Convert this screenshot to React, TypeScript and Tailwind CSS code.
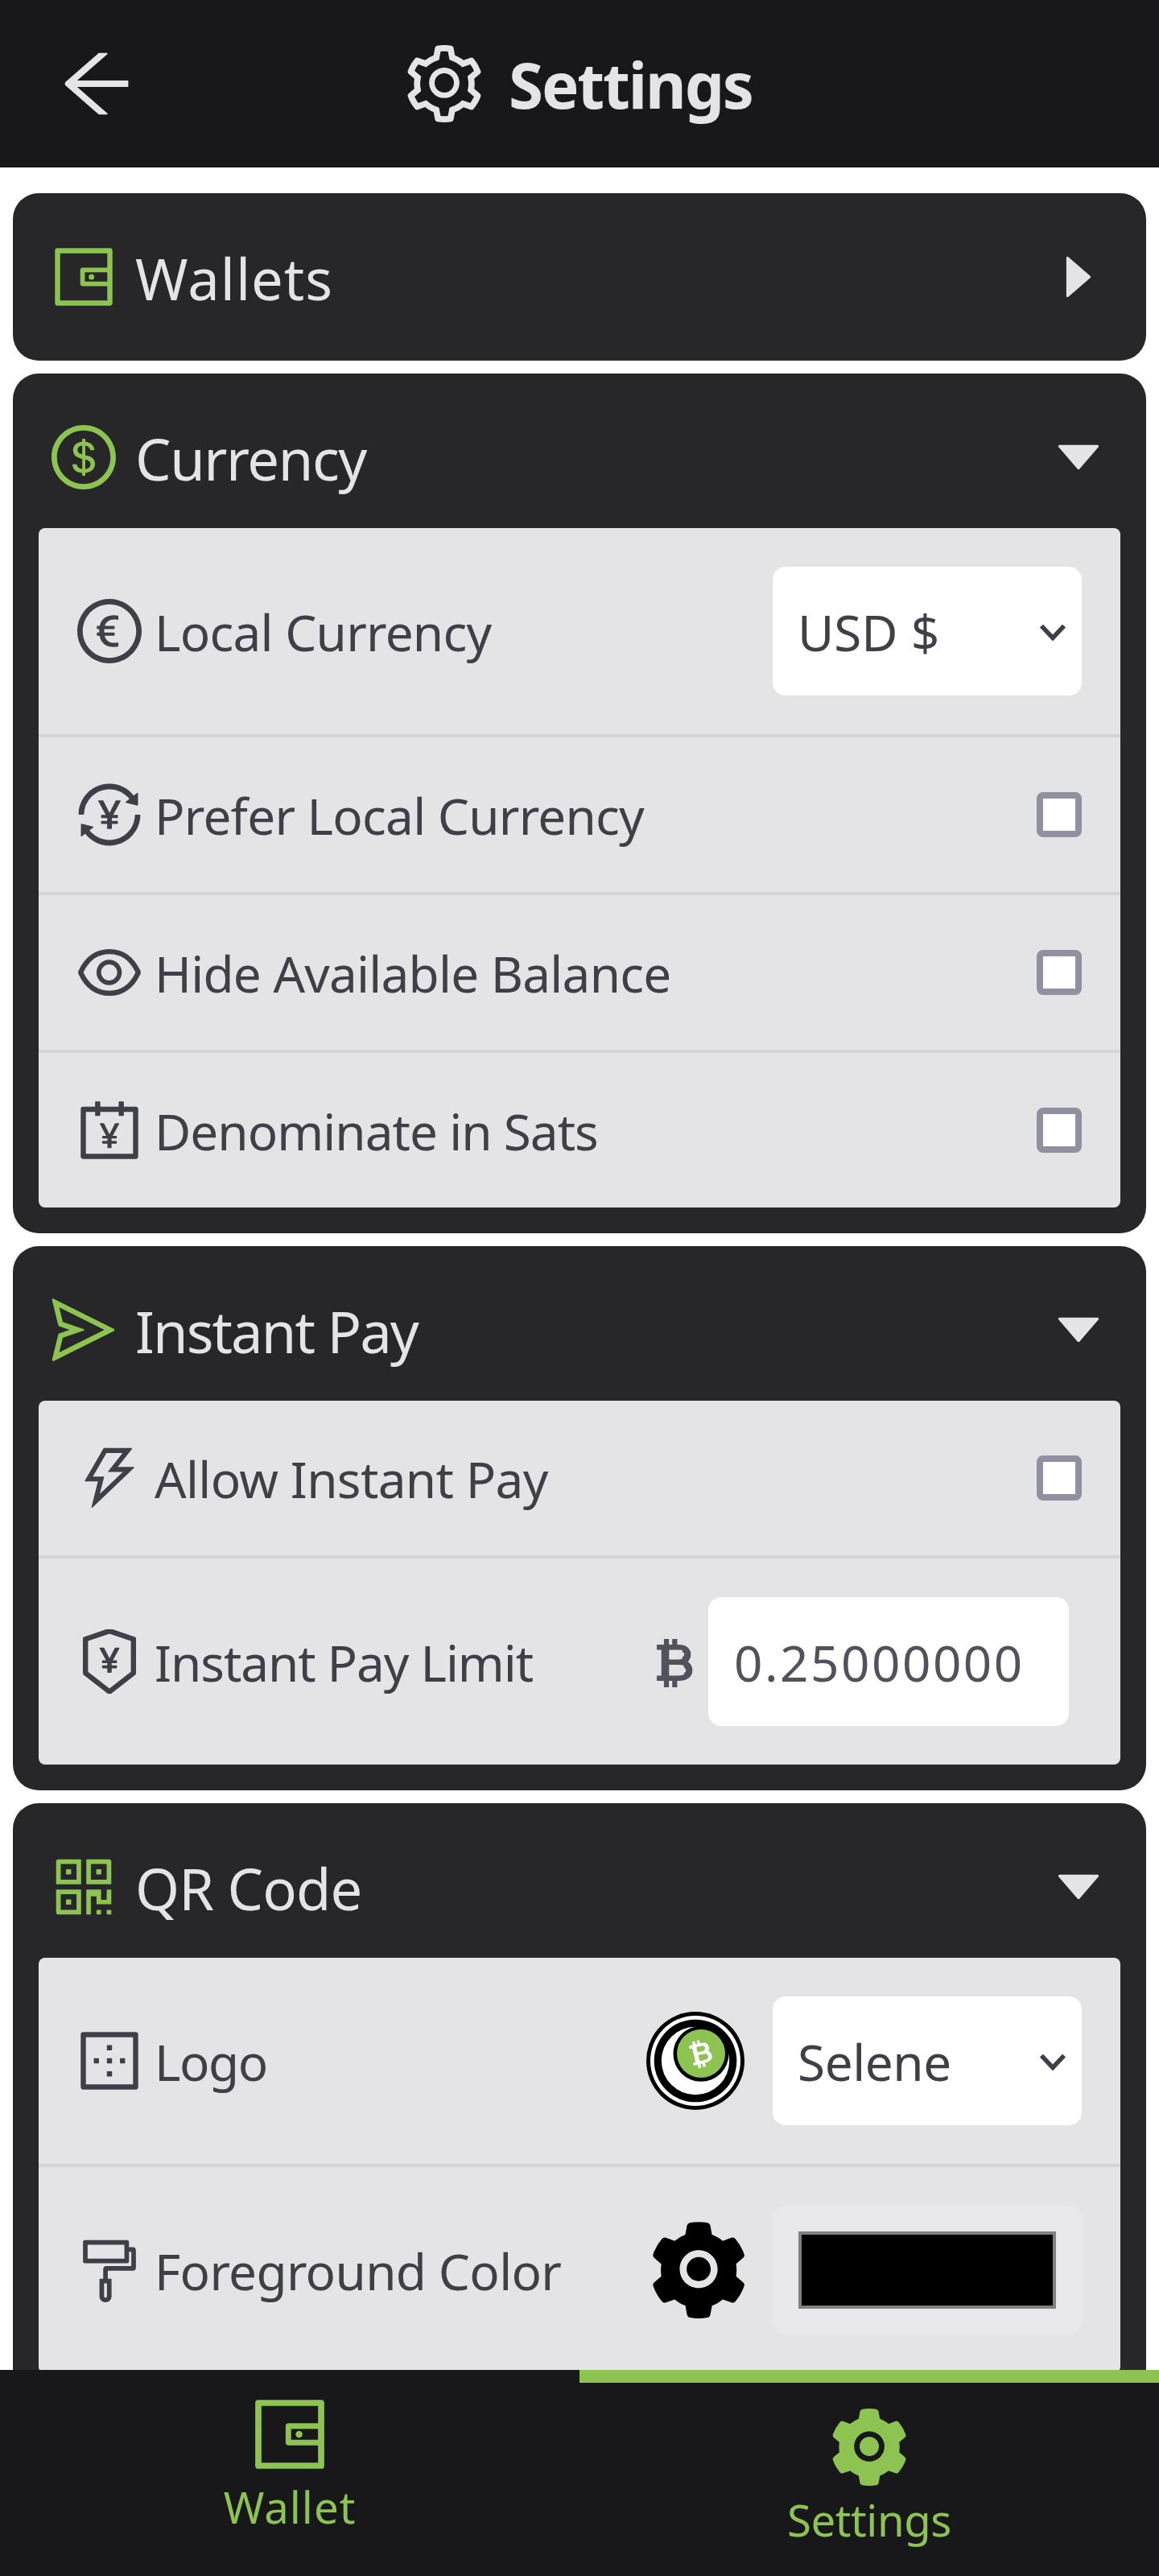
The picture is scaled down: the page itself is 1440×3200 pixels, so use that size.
import React from "react";
import {
  AiFillCaretDown, AiFillCaretRight, AiFillSetting, AiOutlineAccountBook, AiOutlineArrowLeft,
  AiOutlineBorderOuter, AiOutlineDollarCircle, AiOutlineEuroCircle, AiOutlineEye, AiOutlineFormatPainter,
  AiOutlinePropertySafety, AiOutlineQrcode, AiOutlineSend, AiOutlineSetting, AiOutlineThunderbolt,
  AiOutlineTransaction, AiOutlineWallet,
} from "react-icons/ai";

type IconType = React.ComponentType<{ className?: string; viewBox?: string }>;

function Icon({ as: As, className }: { as: IconType; className: string }) {
  return <As viewBox="64 64 896 896" className={`shrink-0 ${className}`} />;
}

function Card({ icon, title, tracking, open = true, children }: {
  icon: IconType; title: string; tracking: string; open?: boolean; children?: React.ReactNode;
}) {
  return (
    <section className={`rounded-[32px] bg-zinc-800 px-8 ${open ? "pb-8" : ""}`}>
      <header className="flex h-[208px] items-center pl-4 pr-5">
        <Icon as={icon} className="size-20 text-[#8dc351]" />
        <h2 className={`ml-6 mt-[3px] grow text-[70.5px] leading-[96px] text-zinc-200 ${tracking}`}>{title}</h2>
        <Icon as={open ? AiFillCaretDown : AiFillCaretRight} className="size-16 text-zinc-200" />
      </header>
      {open && <div className="-mt-4 divide-y-4 divide-[#d4d4d6] overflow-hidden rounded-lg bg-zinc-200">{children}</div>}
    </section>
  );
}

function Row({ icon, label, tracking, tall, children }: {
  icon: IconType; label: string; tracking: string; tall?: boolean; children: React.ReactNode;
}) {
  return (
    <div className={`flex box-content items-center ${tall ? "h-64" : "h-48"}`}>
      <Icon as={icon} className="ml-12 size-20 text-zinc-700" />
      <span className={`ml-4 mt-px grow whitespace-nowrap text-[62px] leading-[96px] text-zinc-700 ${tracking}`}>{label}</span>
      <div className="mr-12 flex shrink-0 items-center">{children}</div>
    </div>
  );
}

function Checkbox() {
  return <div className="size-14 rounded-lg border-8 border-[#9090a0] bg-white" />;
}

function Select({ value, tracking }: { value: string; tracking: string }) {
  return (
    <div className="flex h-40 w-96 items-center justify-between rounded-2xl bg-white pl-[31px] pr-5 text-zinc-700">
      <span className={`mt-px whitespace-nowrap text-[62px] leading-[96px] ${tracking}`}>{value}</span>
      <svg viewBox="0 0 32 20" className="mt-1 h-5 w-8" fill="none" stroke="currentColor" strokeWidth="5.5">
        <path d="M2 1.5 16 16.5 30 1.5" />
      </svg>
    </div>
  );
}

// Bitcoin mark on a 45x60 grid: two bars through a double-bowled stem.
function BitcoinMark() {
  return (
    <g fill="none" stroke="currentColor" strokeWidth="6.6">
      <path d="M12 0v10M22.3 0v10M12 50v10M22.3 50v10" strokeWidth="6.2" />
      <path d="M0 10.3h27c8 0 12 3.5 12 9s-4 9.500-12 9.500H12M27 28.800c9.500 0 14 4.300 14 10.200s-5 9.700-14 9.700H0" />
      <path d="M10.500 8v43" strokeWidth="9.6" />
      <path d="M33 12.500c3.700 1.500 5 3.500 5 6.500s-1.300 5.500-5 7.500M35 31.500c3.300 1.500 5 4 5 7.500s-1.700 6-5 7.500" strokeWidth="7.500" />
    </g>
  );
}

function SeleneLogo() {
  return (
    <svg viewBox="0 0 122 122" className="size-[122px]">
      <circle cx="61" cy="61" r="61" fill="#000" />
      <circle cx="61" cy="61" r="56" fill="#fff" />
      <circle cx="61" cy="61" r="51.3" fill="#000" />
      <circle cx="61" cy="61" r="42.2" fill="#fff" />
      <circle cx="68" cy="52.300" r="34.5" fill="#000" />
      <circle cx="68" cy="52" r="30" fill="#8dc351" />
      <g className="text-white" transform="translate(68.3 52) rotate(-14) scale(.56) translate(-22.5 -30)">
        <BitcoinMark />
      </g>
    </svg>
  );
}

export default function App() {
  return (
    <div className="flex h-[3200px] w-[1440px] flex-col overflow-hidden bg-white font-['Noto_Sans',sans-serif]">
      <header className="flex h-[208px] shrink-0 items-center border-b-2 border-[#121214] bg-zinc-900 pt-0.5 text-zinc-200">
        <Icon as={AiOutlineArrowLeft} className="ml-[72px] size-24" />
        <Icon as={AiOutlineSetting} className="ml-[336px] size-24" />
        <h1 className="ml-8 mt-0.5 text-[78px] font-bold leading-[112px] tracking-[-2.1px]">Settings</h1>
      </header>
      <main className="flex min-h-0 grow flex-col gap-4 overflow-hidden px-4 pt-8 *:shrink-0">
        <Card icon={AiOutlineWallet} title="Wallets" tracking="tracking-[1px]" open={false} />
        <Card icon={AiOutlineDollarCircle} title="Currency" tracking="tracking-[-1.4px]">
          <Row icon={AiOutlineEuroCircle} label="Local Currency" tracking="tracking-[-0.75px]" tall>
            <Select value="USD $" tracking="" />
          </Row>
          <Row icon={AiOutlineTransaction} label="Prefer Local Currency" tracking="tracking-[-0.75px]"><Checkbox /></Row>
          <Row icon={AiOutlineEye} label="Hide Available Balance" tracking="tracking-[-0.75px]"><Checkbox /></Row>
          <Row icon={AiOutlineAccountBook} label="Denominate in Sats" tracking="tracking-[-0.95px]"><Checkbox /></Row>
        </Card>
        <Card icon={AiOutlineSend} title="Instant Pay" tracking="tracking-[-1.9px]">
          <Row icon={AiOutlineThunderbolt} label="Allow Instant Pay" tracking="tracking-[-0.65px]"><Checkbox /></Row>
          <Row icon={AiOutlinePropertySafety} label="Instant Pay Limit" tracking="tracking-[-1.05px]" tall>
            <svg viewBox="0 0 45 60" className="mr-[19px] mt-1 h-[60px] w-[45px] text-zinc-600"><BitcoinMark /></svg>
            <div className="mr-4 flex h-40 w-[448px] items-center rounded-2xl bg-white pl-8 text-[62px] leading-[96px] tracking-[2.5px] text-zinc-600">
              <span className="mt-px">0.25000000</span>
            </div>
          </Row>
        </Card>
        <Card icon={AiOutlineQrcode} title="QR Code" tracking="tracking-[-0.9px]">
          <Row icon={AiOutlineBorderOuter} label="Logo" tracking="tracking-[-1.5px]" tall>
            <div className="mr-[35px]"><SeleneLogo /></div>
            <Select value="Selene" tracking="tracking-[-0.4px]" />
          </Row>
          <Row icon={AiOutlineFormatPainter} label="Foreground Color" tracking="tracking-[-0.65px]" tall>
            <Icon as={AiFillSetting} className="mr-8 size-[120px] text-black" />
            <div className="h-40 w-96 rounded-2xl bg-[#e9e9ed] px-8 py-8">
              <div className="h-24 border-4 border-[#808080] bg-black" />
            </div>
          </Row>
        </Card>
      </main>
      <nav className="grid h-64 shrink-0 grid-cols-2 bg-zinc-900 text-[54.5px] leading-[80px] text-[#8dc351]">
        <div className="flex flex-col items-center pt-8">
          <Icon as={AiOutlineWallet} className="size-24" />
          <span className="mt-0.5 tracking-[1px]">Wallet</span>
        </div>
        <div className="flex flex-col items-center border-t-[16px] border-[#8dc351] pt-8">
          <Icon as={AiFillSetting} className="size-24" />
          <span className="mt-0.5 tracking-[-0.4px]">Settings</span>
        </div>
      </nav>
    </div>
  );
}
